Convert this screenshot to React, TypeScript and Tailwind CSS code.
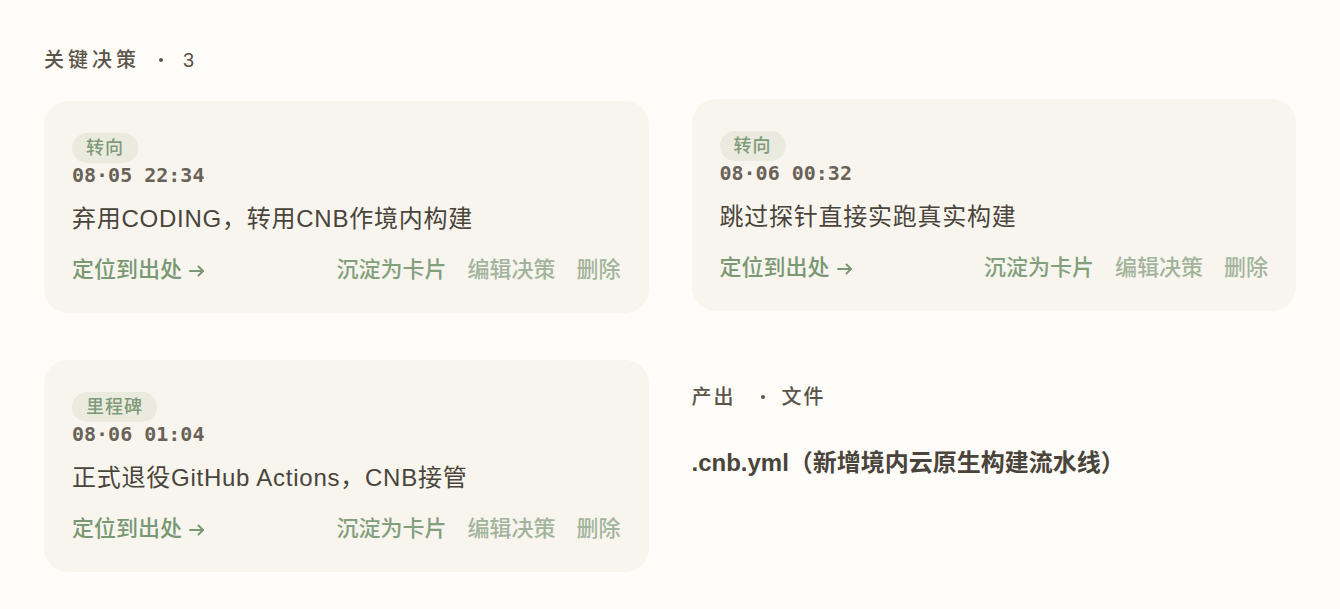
import React from 'react'

type Decision = {
  tag: string
  time: string
  title: string
  lifted?: boolean
}

const decisions: Decision[] = [
  { tag: '转向', time: '08·05 22:34', title: '弃用CODING，转用CNB作境内构建' },
  { tag: '转向', time: '08·06 00:32', title: '跳过探针直接实跑真实构建', lifted: true },
  { tag: '里程碑', time: '08·06 01:04', title: '正式退役GitHub Actions，CNB接管' },
]

const sans = 'font-["Liberation_Sans","Noto_Sans_CJK_SC",sans-serif]'

const Dot = ({ className = '' }: { className?: string }) => (
  <span className={`inline-block h-[4px] w-[4px] rounded-full bg-[#5b5449] ${className}`} />
)

const DecisionCard = ({ d }: { d: Decision }) => (
  <div
    className={`rounded-[24px] bg-[#f7f5ee] px-[28px] pt-[32px] pb-[29px] ${
      d.lifted ? '-translate-y-[2px]' : ''
    }`}
  >
    <span className="inline-flex h-[30px] items-center rounded-full bg-[#ebeadf] px-[14px] text-[18px] font-medium tracking-[1px] text-[#7d9b78]">
      {d.tag}
    </span>
    <div className='font-["DejaVu_Sans_Mono",monospace] text-[20px] leading-[24px] font-bold text-[#6a6257]'>
      {d.time}
    </div>
    <div className="mt-[16px] text-[24px] leading-[32px] tracking-[0.75px] text-[#4a443b]">{d.title}</div>
    <div className="mt-[21px] flex items-center justify-between text-[22px] leading-[28px] font-medium">
      <span className="flex items-center text-[#7a9874]">
        定位到出处
        <svg
          className="ml-[6px] mt-[1px]"
          width="18"
          height="18"
          viewBox="0 0 18 18"
          fill="none"
          stroke="currentColor"
          strokeWidth="2"
          strokeLinecap="round"
          strokeLinejoin="round"
        >
          <path d="M2 9h13" />
          <path d="M10.5 4.5L15 9l-4.5 4.5" />
        </svg>
      </span>
      <div className="flex gap-[21px]">
        <span className="text-[#83a07d]">沉淀为卡片</span>
        <span className="text-[#a3b49c]">编辑决策</span>
        <span className="text-[#a3b49c]">删除</span>
      </div>
    </div>
  </div>
)

export default function App() {
  return (
    <div className={`min-h-screen bg-[#fdfcf8] px-[44px] pt-[46px] pb-[36px] ${sans}`}>
      <h2 className="flex items-center text-[20px] leading-[28px] font-medium text-[#5b5449]">
        <span className="tracking-[4px]">关键决策</span>
        <Dot className="ml-[19px]" />
        <span className="ml-[20px]">3</span>
      </h2>
      <div className="mt-[27px] grid grid-cols-2 gap-x-[43px] gap-y-[47px]">
        {decisions.map((d, i) => (
          <DecisionCard key={i} d={d} />
        ))}
        <div className="pt-[23px]">
          <h3 className="flex items-center text-[20px] leading-[28px] font-medium text-[#5b5449]">
            <span className="tracking-[2px]">产出</span>
            <Dot className="ml-[25px]" />
            <span className="ml-[17px] tracking-[2px]">文件</span>
          </h3>
          <div className="mt-[36px] text-[24px] leading-[32px] font-semibold text-[#4a443b]">
            .cnb.yml（新增境内云原生构建流水线）
          </div>
        </div>
      </div>
    </div>
  )
}
